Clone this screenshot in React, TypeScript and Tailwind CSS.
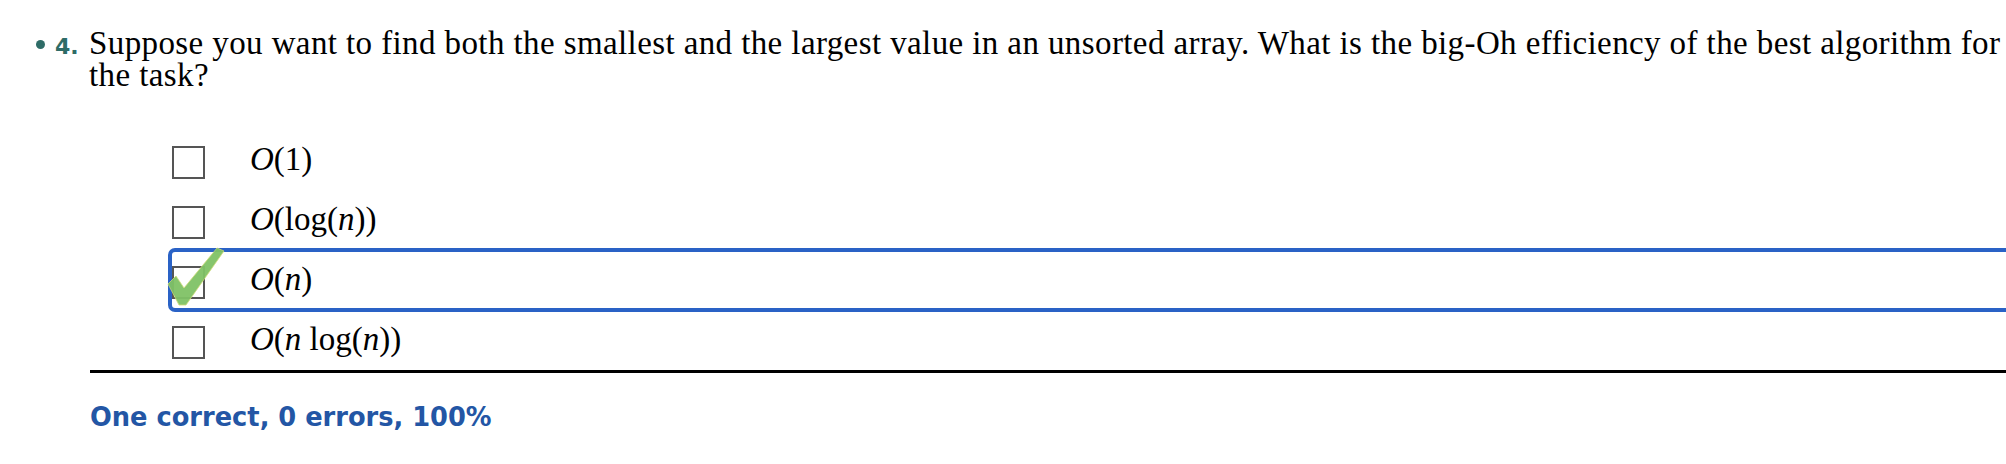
import React from "react";

type Option = { key: string; label: React.ReactNode; checked?: boolean };

const serif = "font-['Liberation_Serif',serif]";

const options: Option[] = [
  {
    key: "1",
    label: (
      <>
        <i>O</i>(1)
      </>
    ),
  },
  {
    key: "log",
    label: (
      <>
        <i>O</i>(log(<i>n</i>))
      </>
    ),
  },
  {
    key: "n",
    label: (
      <>
        <i>O</i>(<i>n</i>)
      </>
    ),
    checked: true,
  },
  {
    key: "nlog",
    label: (
      <>
        <i>O</i>(<i>n</i> log(<i>n</i>))
      </>
    ),
  },
];

function CheckMark() {
  return (
    <svg
      className="absolute -left-[6px] -top-[7px] h-[60px] w-[60px]"
      viewBox="0 0 60 60"
    >
      <polygon
        points="2,38 10,30 18,42 51,2 58,5 20,59 13,59"
        fill="#80c266"
        stroke="#cfdc74"
        strokeWidth="0.8"
        strokeLinejoin="round"
        opacity="0.95"
      />
    </svg>
  );
}

function OptionRow({ option }: { option: Option }) {
  return (
    <div className="relative flex h-[60px] items-start">
      {option.checked && (
        <div className="pointer-events-none absolute -left-[4px] -top-[5px] bottom-[1px] -right-[200px] rounded-[7px] border-4 border-[#2a62c6]" />
      )}
      <span className="mt-[13px] block h-[33px] w-[33px] shrink-0 border-2 border-[#555] bg-white" />
      {option.checked && <CheckMark />}
      <span className={`ml-[45px] mt-[11px] text-[33px] leading-[30px] text-black ${serif}`}>
        {option.label}
      </span>
    </div>
  );
}

export default function App() {
  return (
    <div className="h-[464px] w-full overflow-hidden bg-white">
      <div className="flex items-baseline pt-[27px]">
        <span className="block w-[89px] shrink-0 pl-[36px] font-['DejaVu_Sans',sans-serif] text-[22px] font-bold text-[#2e6c67]">
          <span className="mb-[5px] inline-block h-[9px] w-[9px] rounded-full bg-[#2e6c67]" />
          <span className="ml-[10px]">4.</span>
        </span>
        <div className="min-w-0 flex-1">
          <p className={`text-[33px] leading-[32px] tracking-[0.4px] text-black ${serif}`}>
            Suppose you want to find both the smallest and the largest value in an
            unsorted array. What is the big-Oh efficiency of the best algorithm for
            the task?
          </p>

          <div className="ml-[83px] mt-[42px]">
            {options.map((option) => (
              <OptionRow key={option.key} option={option} />
            ))}
          </div>

          <div className="-mt-[3px] ml-[1px] border-t-[3px] border-black" />

          <p className="ml-[1px] mt-[25px] font-['DejaVu_Sans',sans-serif] text-[25.7px] font-bold text-[#2356a5]">
            One correct, 0 errors, 100%
          </p>
        </div>
      </div>
    </div>
  );
}
